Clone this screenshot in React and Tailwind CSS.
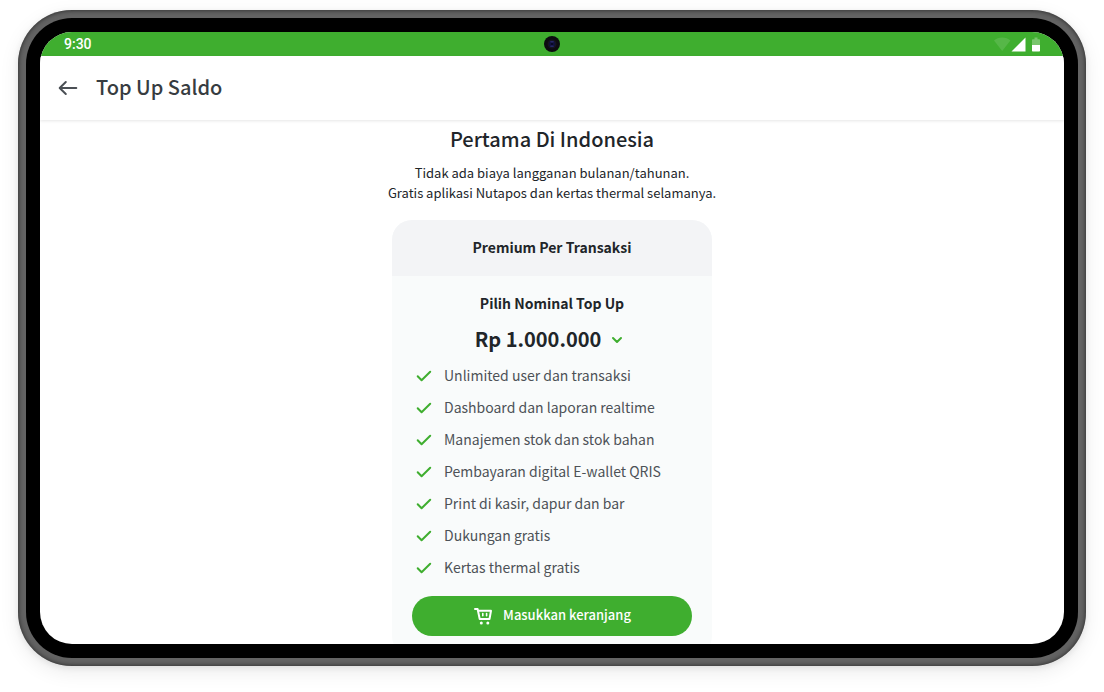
import { useState } from 'react';

const features = [
    'Unlimited user dan transaksi',
    'Dashboard dan laporan realtime',
    'Manajemen stok dan stok bahan',
    'Pembayaran digital E-wallet QRIS',
    'Print di kasir, dapur dan bar',
    'Dukungan gratis',
    'Kertas thermal gratis',
];

const nominals = ['Rp 1.000.000'];

function StatusBar() {
    return (
        <div className="relative flex h-6 shrink-0 items-center justify-between bg-[#3fae2f] px-6 text-white">
            <span className="font-[Roboto,sans-serif] text-sm font-medium">9:30</span>
            <svg width="46" height="16" viewBox="0 0 46 16" fill="currentColor" aria-hidden="true">
                <path d="M0 4.6C2.2 2.6 5 1.5 8.2 1.5s6 1.1 8.2 3.1L8.2 15z" opacity=".12" />
                <path d="M17.5 15.5h14v-14z" />
                <path d="M38 4.2c0-.6.4-1 1-1h1.5V1.5h3v1.7H45c.6 0 1 .4 1 1V9h-8z" opacity=".3" />
                <path d="M38 9h8v5.5c0 .6-.4 1-1 1h-6c-.6 0-1-.4-1-1z" />
            </svg>
            <div className="absolute inset-0 flex items-center justify-center">
                <svg width="16" height="16" viewBox="0 0 16 16" aria-hidden="true">
                    <circle cx="8" cy="8" r="8" fill="#0c0c10" />
                    <circle cx="8" cy="8" r="4.5" fill="#15151f" />
                    <circle cx="8" cy="8" r="3" fill="#10103c" />
                    <ellipse cx="8" cy="5.8" rx="2" ry="0.8" fill="#28286a" />
                    <ellipse cx="8" cy="10.2" rx="2" ry="0.8" fill="#28286a" />
                    <circle cx="8" cy="8" r="1" fill="#06061a" />
                </svg>
            </div>
        </div>
    );
}

function Header() {
    return (
        <header className="z-10 flex h-16 shrink-0 items-center gap-4 bg-white px-4 shadow-[0_1px_3px_rgba(0,0,0,0.1)]">
            <button type="button" aria-label="Kembali" className="text-[#4b5055]">
                <svg width="24" height="24" viewBox="0 0 24 24" fill="none" stroke="currentColor" strokeWidth="2" strokeLinecap="round" strokeLinejoin="round" className="block">
                    <path d="M20.3 12H4M9.8 6 3.7 12l6.1 6" />
                </svg>
            </button>
            <h1 className="pb-0.5 text-xl font-medium text-[#373c41]">Top Up Saldo</h1>
        </header>
    );
}

function CartIcon() {
    return (
        <svg width="20" height="20" viewBox="0 0 20 20" fill="none" stroke="currentColor" strokeWidth="2" strokeLinecap="round" strokeLinejoin="round" aria-hidden="true">
            <path d="M2 3h2.6l2.1 10h9.8L18 4.8H5" />
            <path d="M9.8 7.5v2.2M13.6 7.5v2.2" strokeWidth="1.6" />
            <circle cx="8.3" cy="16.9" r="1.5" fill="currentColor" stroke="none" />
            <circle cx="14.8" cy="16.9" r="1.5" fill="currentColor" stroke="none" />
        </svg>
    );
}

function PlanCard() {
    const [nominal, setNominal] = useState(nominals[0]);

    return (
        <section className="w-80 shrink-0 overflow-hidden rounded-[20px] bg-[#f9fbfb]">
            <h3 className="flex h-14 items-center justify-center bg-[#f3f4f6] pb-0.5 text-sm font-bold">Premium Per Transaksi</h3>
            <div className="flex flex-col items-center px-5 pt-4 pb-5">
                <label htmlFor="nominal" className="pb-0.5 text-sm leading-[22px] font-bold">Pilih Nominal Top Up</label>
                <div className="relative mt-2 flex h-8 items-center">
                    <select
                        id="nominal"
                        value={nominal}
                        onChange={(e) => setNominal(e.target.value)}
                        className="field-sizing-content appearance-none bg-transparent pr-7 pb-0.5 text-xl leading-8 font-bold"
                    >
                        {nominals.map(n => <option key={n}>{n}</option>)}
                    </select>
                    <svg width="12" height="8" viewBox="0 0 12 8" fill="none" stroke="#3fae2f" strokeWidth="2" strokeLinecap="round" strokeLinejoin="round" className="pointer-events-none absolute right-1.5">
                        <path d="M2 2l4 4 4-4" />
                    </svg>
                </div>
                <ul className="mt-1 w-full">
                    {features.map(f => (
                        <li key={f} className="flex h-8 items-center gap-3 pl-1 text-sm text-[#4d5257]">
                            <svg width="16" height="12" viewBox="0 0 16 12" fill="none" stroke="#3fae2f" strokeWidth="2" strokeLinecap="round" strokeLinejoin="round" aria-hidden="true">
                                <path d="M1.7 6.3 5.6 10.2 14.2 1.8" />
                            </svg>
                            <span className="pb-0.5">{f}</span>
                        </li>
                    ))}
                </ul>
                <button type="button" className="mt-3 flex h-10 w-full items-center justify-center gap-2.5 rounded-full bg-[#3fae2f] text-[13px] font-medium text-white">
                    <CartIcon />
                    <span className="pb-0.5">Masukkan keranjang</span>
                </button>
            </div>
        </section>
    );
}

export default function App() {
    return (
        <div className="h-screen bg-white px-[18px] pt-[10px] pb-[26px] font-['Noto_Sans_CJK_SC',sans-serif] text-[#212529]">
            <div className="h-full rounded-[54px] bg-[#636363] p-2 shadow-[inset_0_0_5px_#222,0_2px_6px_rgba(0,0,0,0.08),0_6px_20px_rgba(0,0,0,0.08)]">
                <div className="h-full rounded-[46px] bg-black p-3.5">
                    <div className="flex h-full flex-col overflow-hidden rounded-[32px] bg-white">
                        <StatusBar />
                        <Header />
                        <main className="flex min-h-0 flex-1 flex-col items-center overflow-hidden pt-[3px]">
                            <h2 className="text-xl leading-8 font-medium">Pertama Di Indonesia</h2>
                            <p className="mt-2 mb-[17px] text-center text-[13px] leading-5">
                                Tidak ada biaya langganan bulanan/tahunan.<br />
                                Gratis aplikasi Nutapos dan kertas thermal selamanya.
                            </p>
                            <PlanCard />
                        </main>
                    </div>
                </div>
            </div>
        </div>
    );
}
